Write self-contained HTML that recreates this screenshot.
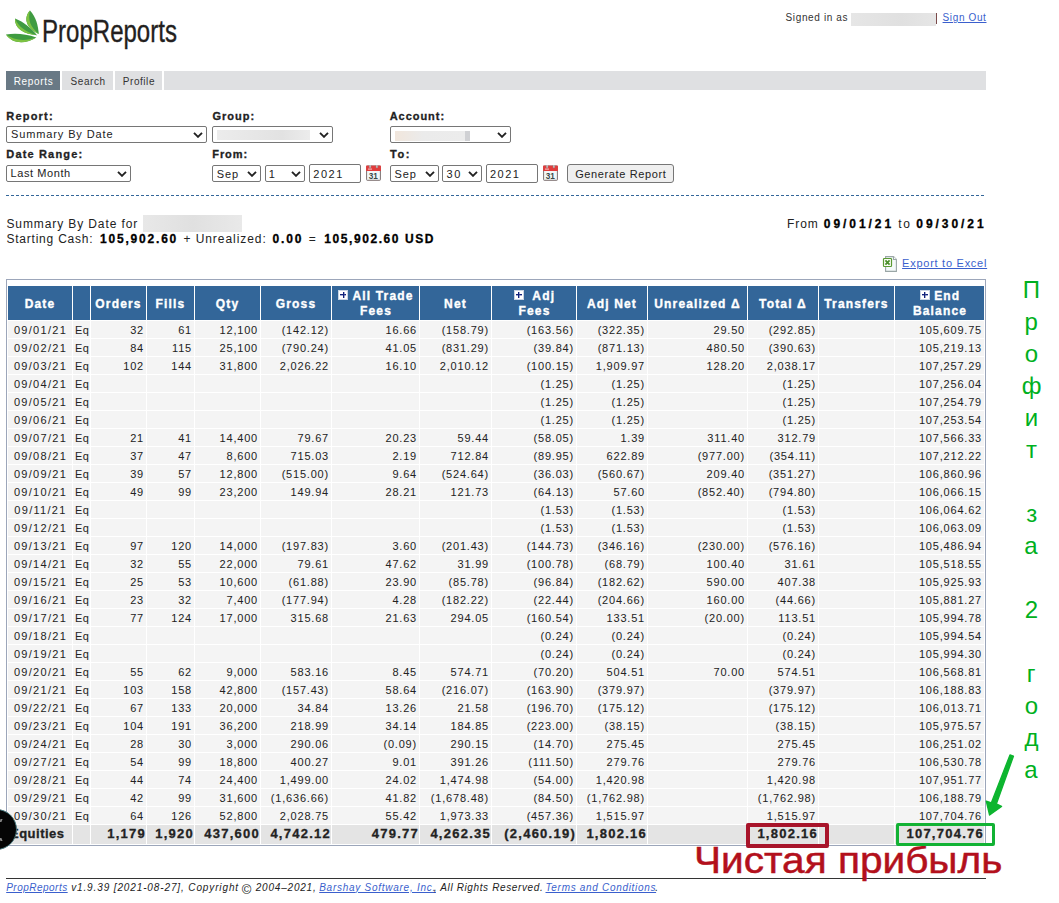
<!DOCTYPE html>
<html><head><meta charset="utf-8"><style>
*{box-sizing:border-box}
html,body{margin:0;padding:0;background:#fff;width:1059px;height:903px;overflow:hidden;position:relative;font-family:"Liberation Sans",sans-serif;color:#222}
.a{position:absolute;white-space:nowrap}
#tbl{position:absolute;left:7px;top:285px;border-collapse:separate;border-spacing:1px;table-layout:fixed;width:978px}
#tbl th{background:#336699;color:#fff;-webkit-text-stroke:0.35px #fff;font-size:12px;font-weight:bold;line-height:15px;height:34px;padding:3px 0 0 0;text-align:center;letter-spacing:1.15px;white-space:nowrap;overflow:hidden;vertical-align:middle}
#tbl th.two{padding-top:2px;padding-left:1px}
#tbl td{background:#f4f4f4;font-size:11px;height:17px;line-height:16px;padding:1px 2px 0 2px;color:#222;letter-spacing:0.8px;white-space:nowrap;overflow:hidden}
#tbl td.n{text-align:right}
#tbl td.dt{text-align:center;letter-spacing:1.3px;padding-left:1px;padding-right:0}
#tbl td.eq{text-align:left;padding-left:2px;letter-spacing:0.3px}
#tbl tr.t td{background:#e4e4e4;font-weight:bold;font-size:13px;height:19px;line-height:18px;padding-top:0;padding-right:0;letter-spacing:1.25px;color:#222;vertical-align:top;-webkit-text-stroke:0.3px #222}
#tbl tr.t td.tl{letter-spacing:0.5px;padding-left:2px}
.pl{display:inline-block;width:10px;height:10px;background:#fff;position:relative;vertical-align:0px;box-shadow:inset 0 0 0 1px #c8d4e4}
.pl:before{content:"";position:absolute;left:2px;top:4px;width:6px;height:1px;background:#10207a;box-shadow:0 0.5px 0 #4a5aa0}
.pl:after{content:"";position:absolute;left:4.5px;top:1.5px;width:1px;height:6px;background:#10207a;box-shadow:0.5px 0 0 #4a5aa0}
</style></head><body>
<svg class="a" style="left:0;top:0" width="60" height="55" viewBox="0 0 60 55">
<path d="M30 10.5 C 24 17, 24.5 27, 38.8 34 C 38 25, 36 17, 30 10.5 Z" fill="#3f9b41"/>
<path d="M30 10.5 C 24 17, 24.5 27, 38.8 34 C 30.5 27, 27.5 20, 30 10.5 Z" fill="#7dc242"/>
<path d="M15 18.5 C 14.5 28, 23 34, 37 35.3 C 31 28, 24 22, 15 18.5 Z" fill="#3f9b41"/>
<path d="M15 18.5 C 14.5 28, 23 34, 37 35.3 C 26 32, 18.5 27, 15 18.5 Z" fill="#7dc242"/>
<path d="M6 34.5 C 13 44.5, 26 44, 36.3 37.5 C 26 34, 16 33, 6 34.5 Z" fill="#3f9b41"/>
<path d="M6 34.5 C 13 44.5, 26 44, 36.3 37.5 C 25 41.5, 14 40.5, 6 34.5 Z" fill="#7dc242"/>
</svg>
<div class="a" style="left:42.08px;top:12.86px;font-size:31px;line-height:37.2px;color:#231f20;-webkit-text-stroke:0.35px #231f20;transform:scaleX(0.7754);transform-origin:0 0">PropReports</div>
<div class="a" style="left:785.55px;top:12.04px;font-size:10px;line-height:12.00px;letter-spacing:0.632px;color:#333;">Signed in as</div>
<div class="a" style="left:851px;top:13px;width:85px;height:13px;background:linear-gradient(to right,#e6e6e6,#e0e0e0 60%,#e6e6e6)"></div>
<div class="a" style="left:936px;top:13px;width:1px;height:11px;background:#7a4a4a"></div>
<div class="a" style="left:942.55px;top:12.04px;font-size:10px;line-height:12.00px;letter-spacing:0.629px;color:#3a5fcd;text-decoration:underline;">Sign Out</div>
<div class="a" style="left:6px;top:71px;width:980px;height:19px;background:#dfe0e2"></div>
<div class="a" style="left:6px;top:71px;width:54px;height:19px;background:#697985"></div>
<div class="a" style="left:60px;top:71px;width:2px;height:19px;background:#fff"></div>
<div class="a" style="left:113px;top:71px;width:2px;height:19px;background:#fff"></div>
<div class="a" style="left:162px;top:71px;width:2px;height:19px;background:#fff"></div>
<div class="a" style="left:13.70px;top:75.53px;font-size:10px;line-height:12.00px;letter-spacing:0.658px;color:#fff;">Reports</div>
<div class="a" style="left:70.55px;top:75.53px;font-size:10px;line-height:12.00px;letter-spacing:0.570px;color:#333;">Search</div>
<div class="a" style="left:122.80px;top:75.53px;font-size:10px;line-height:12.00px;letter-spacing:0.550px;color:#333;">Profile</div>
<div class="a" style="left:6.29px;top:109.59px;font-size:11px;line-height:13.20px;letter-spacing:1.202px;color:#222;font-weight:bold;-webkit-text-stroke:0.3px #222;">Report:</div>
<div class="a" style="left:212.56px;top:109.59px;font-size:11px;line-height:13.20px;letter-spacing:0.971px;color:#222;font-weight:bold;-webkit-text-stroke:0.3px #222;">Group:</div>
<div class="a" style="left:389.73px;top:109.59px;font-size:11px;line-height:13.20px;letter-spacing:0.956px;color:#222;font-weight:bold;-webkit-text-stroke:0.3px #222;">Account:</div>
<div class="a" style="left:6.29px;top:147.59px;font-size:11px;line-height:13.20px;letter-spacing:1.163px;color:#222;font-weight:bold;-webkit-text-stroke:0.3px #222;">Date Range:</div>
<div class="a" style="left:212.28px;top:147.59px;font-size:11px;line-height:13.20px;letter-spacing:0.907px;color:#222;font-weight:bold;-webkit-text-stroke:0.3px #222;">From:</div>
<div class="a" style="left:389.89px;top:147.59px;font-size:11px;line-height:13.20px;letter-spacing:1.688px;color:#222;font-weight:bold;-webkit-text-stroke:0.3px #222;">To:</div>
<div class="a" style="left:6px;top:126px;width:201px;height:17px;border:1px solid #767676;border-radius:2px;background:#fff"></div><svg class="a" style="left:192.5px;top:131.5px" width="10" height="6" viewBox="0 0 10 6"><path d="M1 0.8 L5 4.8 L9 0.8" stroke="#222" stroke-width="1.9" fill="none"/></svg>
<div class="a" style="left:11.01px;top:128.09px;font-size:11px;line-height:13.20px;letter-spacing:0.877px;color:#222;">Summary By Date</div>
<div class="a" style="left:212px;top:126px;width:121px;height:17px;border:1px solid #767676;border-radius:2px;background:#fff"></div><svg class="a" style="left:318.5px;top:131.5px" width="10" height="6" viewBox="0 0 10 6"><path d="M1 0.8 L5 4.8 L9 0.8" stroke="#222" stroke-width="1.9" fill="none"/></svg>
<div class="a" style="left:217px;top:130px;width:93px;height:10px;background:linear-gradient(to right,#ececec,#e2e2e2 70%,#ececec)"></div>
<div class="a" style="left:390px;top:126px;width:121px;height:17px;border:1px solid #767676;border-radius:2px;background:#fff"></div><svg class="a" style="left:496.5px;top:131.5px" width="10" height="6" viewBox="0 0 10 6"><path d="M1 0.8 L5 4.8 L9 0.8" stroke="#222" stroke-width="1.9" fill="none"/></svg>
<div class="a" style="left:395px;top:131px;width:70px;height:10px;background:linear-gradient(to right,#f1e6dc,#ebebeb 40%,#ececec)"></div><div class="a" style="left:465px;top:131px;width:5px;height:10px;background:#d0d1d4"></div>
<div class="a" style="left:6px;top:165px;width:125px;height:17px;border:1px solid #767676;border-radius:2px;background:#fff"></div><svg class="a" style="left:116.5px;top:170.5px" width="10" height="6" viewBox="0 0 10 6"><path d="M1 0.8 L5 4.8 L9 0.8" stroke="#222" stroke-width="1.9" fill="none"/></svg>
<div class="a" style="left:10.62px;top:167.09px;font-size:11px;line-height:13.20px;letter-spacing:0.578px;color:#222;">Last Month</div>
<div class="a" style="left:212px;top:165px;width:49px;height:17px;border:1px solid #767676;border-radius:2px;background:#fff"></div><svg class="a" style="left:246.5px;top:170.5px" width="10" height="6" viewBox="0 0 10 6"><path d="M1 0.8 L5 4.8 L9 0.8" stroke="#222" stroke-width="1.9" fill="none"/></svg>
<div class="a" style="left:216.70px;top:167.59px;font-size:11px;line-height:13.20px;letter-spacing:0.928px;color:#222;">Sep</div>
<div class="a" style="left:265px;top:165px;width:40px;height:17px;border:1px solid #767676;border-radius:2px;background:#fff"></div><svg class="a" style="left:290.5px;top:170.5px" width="10" height="6" viewBox="0 0 10 6"><path d="M1 0.8 L5 4.8 L9 0.8" stroke="#222" stroke-width="1.9" fill="none"/></svg>
<div class="a" style="left:268.68px;top:167.59px;font-size:11px;line-height:13.20px;letter-spacing:0.000px;color:#222;">1</div>
<div class="a" style="left:390px;top:165px;width:49px;height:17px;border:1px solid #767676;border-radius:2px;background:#fff"></div><svg class="a" style="left:424.5px;top:170.5px" width="10" height="6" viewBox="0 0 10 6"><path d="M1 0.8 L5 4.8 L9 0.8" stroke="#222" stroke-width="1.9" fill="none"/></svg>
<div class="a" style="left:394.50px;top:167.59px;font-size:11px;line-height:13.20px;letter-spacing:0.928px;color:#222;">Sep</div>
<div class="a" style="left:442px;top:165px;width:40px;height:17px;border:1px solid #767676;border-radius:2px;background:#fff"></div><svg class="a" style="left:467.5px;top:170.5px" width="10" height="6" viewBox="0 0 10 6"><path d="M1 0.8 L5 4.8 L9 0.8" stroke="#222" stroke-width="1.9" fill="none"/></svg>
<div class="a" style="left:446.56px;top:167.59px;font-size:11px;line-height:13.20px;letter-spacing:1.615px;color:#222;">30</div>
<div class="a" style="left:309px;top:164px;width:52px;height:19px;border:1px solid #767676;border-radius:2px;background:#fff"></div>
<div class="a" style="left:313.25px;top:167.59px;font-size:11px;line-height:13.20px;letter-spacing:1.523px;color:#222;">2021</div>
<div class="a" style="left:486px;top:164px;width:52px;height:19px;border:1px solid #767676;border-radius:2px;background:#fff"></div>
<div class="a" style="left:489.95px;top:167.59px;font-size:11px;line-height:13.20px;letter-spacing:1.523px;color:#222;">2021</div>
<svg class="a" style="left:366px;top:165px" width="15" height="16" viewBox="0 0 15 16"><rect x="0.6" y="1" width="13.8" height="14.3" rx="0.6" fill="#f2f8f8" stroke="#7d7070" stroke-width="1"/><rect x="0.1" y="0.6" width="14.8" height="5.4" fill="#e23c3c"/><rect x="3.3" y="-0.6" width="1.6" height="3.6" rx="0.8" fill="#d8d8d8" stroke="#888" stroke-width="0.5"/><rect x="10.1" y="-0.6" width="1.6" height="3.6" rx="0.8" fill="#d8d8d8" stroke="#888" stroke-width="0.5"/><rect x="2" y="3.6" width="4" height="1" fill="#f6c8c8"/><text x="7.3" y="14" font-size="8.2" font-weight="bold" text-anchor="middle" fill="#3b4848" font-family="Liberation Sans">31</text></svg>
<svg class="a" style="left:543px;top:165px" width="15" height="16" viewBox="0 0 15 16"><rect x="0.6" y="1" width="13.8" height="14.3" rx="0.6" fill="#f2f8f8" stroke="#7d7070" stroke-width="1"/><rect x="0.1" y="0.6" width="14.8" height="5.4" fill="#e23c3c"/><rect x="3.3" y="-0.6" width="1.6" height="3.6" rx="0.8" fill="#d8d8d8" stroke="#888" stroke-width="0.5"/><rect x="10.1" y="-0.6" width="1.6" height="3.6" rx="0.8" fill="#d8d8d8" stroke="#888" stroke-width="0.5"/><rect x="2" y="3.6" width="4" height="1" fill="#f6c8c8"/><text x="7.3" y="14" font-size="8.2" font-weight="bold" text-anchor="middle" fill="#3b4848" font-family="Liberation Sans">31</text></svg>
<div class="a" style="left:567px;top:164px;width:107px;height:19px;border:1px solid #767676;border-radius:3px;background:#efefef"></div>
<div class="a" style="left:575.15px;top:167.59px;font-size:11px;line-height:13.20px;letter-spacing:0.622px;color:#222;">Generate Report</div>
<div class="a" style="left:6px;top:195px;width:980px;height:1px;background:repeating-linear-gradient(to right,#336699 0 3px,transparent 3px 5px)"></div>
<div class="a" style="left:6.46px;top:217.14px;font-size:12px;line-height:14.40px;letter-spacing:0.892px;color:#222;">Summary By Date for</div>
<div class="a" style="left:143px;top:215px;width:99px;height:17px;background:linear-gradient(to right,#e8e8e8,#e0e0e0 50%,#e9e9e9)"></div>
<div class="a" style="left:6.46px;top:231.64px;font-size:12px;line-height:14.40px;letter-spacing:0.777px;color:#222;">Starting Cash:</div>
<div class="a" style="left:100.08px;top:231.64px;font-size:12px;line-height:14.40px;letter-spacing:1.793px;color:#000;font-weight:bold;-webkit-text-stroke:0.3px #000;">105,902.60</div>
<div class="a" style="left:183.40px;top:231.64px;font-size:12px;line-height:14.40px;letter-spacing:0.950px;color:#222;">+ Unrealized:</div>
<div class="a" style="left:272.52px;top:231.64px;font-size:12px;line-height:14.40px;letter-spacing:1.873px;color:#000;font-weight:bold;-webkit-text-stroke:0.3px #000;">0.00</div>
<div class="a" style="left:308.80px;top:231.64px;font-size:12px;line-height:14.40px;letter-spacing:0.000px;color:#222;">=</div>
<div class="a" style="left:324.28px;top:231.64px;font-size:12px;line-height:14.40px;letter-spacing:1.578px;color:#000;font-weight:bold;-webkit-text-stroke:0.3px #000;">105,902.60 USD</div>
<div class="a" style="left:787.04px;top:216.94px;font-size:12px;line-height:14.40px;letter-spacing:0.907px;color:#222;">From</div>
<div class="a" style="left:823.82px;top:216.94px;font-size:12px;line-height:14.40px;letter-spacing:2.943px;color:#000;font-weight:bold;-webkit-text-stroke:0.3px #000;">09/01/21</div>
<div class="a" style="left:898.22px;top:216.94px;font-size:12px;line-height:14.40px;letter-spacing:1.640px;color:#222;">to</div>
<div class="a" style="left:916.32px;top:216.94px;font-size:12px;line-height:14.40px;letter-spacing:2.943px;color:#000;font-weight:bold;-webkit-text-stroke:0.3px #000;">09/30/21</div>
<svg class="a" style="left:882px;top:255px" width="16" height="18" viewBox="0 0 16 18"><path d="M3.6 1.6 H11.5 L14.4 4.5 V16.4 H3.6 Z" fill="#f4fafa" stroke="#9aa6a6" stroke-width="1.1"/><path d="M11.5 1.6 V4.5 H14.4" fill="#ffffff" stroke="#9aa6a6" stroke-width="1.1"/><rect x="1.5" y="3.5" width="8" height="8" rx="0.8" fill="#fdfefb" stroke="#5a9a32" stroke-width="1.2"/><path d="M3.4 5.4 L7.6 9.6 M7.6 5.4 L3.4 9.6" stroke="#4a8f2a" stroke-width="1.8"/></svg>
<div class="a" style="left:902.12px;top:256.59px;font-size:11px;line-height:13.20px;letter-spacing:0.737px;color:#3a5fcd;text-decoration:underline;">Export to Excel</div>
<div class="a" style="left:6px;top:279px;width:980px;height:567px;border:1px solid #9ca6ba"></div>
<table id="tbl"><colgroup><col style="width:64px"><col style="width:17px"><col style="width:55px"><col style="width:47px"><col style="width:65px"><col style="width:70px"><col style="width:87px"><col style="width:71px"><col style="width:84px"><col style="width:70px"><col style="width:99px"><col style="width:70px"><col style="width:75px"><col style="width:89px"></colgroup><tr><th>Date</th><th></th><th>Orders</th><th>Fills</th><th>Qty</th><th>Gross</th><th class=two><span class="pl"></span> All Trade<br>Fees</th><th>Net</th><th class=two><span class="pl"></span>&nbsp; Adj<br>Fees</th><th>Adj Net</th><th>Unrealized &Delta;</th><th>Total &Delta;</th><th>Transfers</th><th class=two><span class="pl"></span> End<br>Balance</th></tr><tr class="r"><td class="dt">09/01/21</td><td class="eq">Eq</td><td class="n">32</td><td class="n">61</td><td class="n">12,100</td><td class="n">(142.12)</td><td class="n">16.66</td><td class="n">(158.79)</td><td class="n">(163.56)</td><td class="n">(322.35)</td><td class="n">29.50</td><td class="n">(292.85)</td><td class="n"></td><td class="n">105,609.75</td></tr><tr class="r"><td class="dt">09/02/21</td><td class="eq">Eq</td><td class="n">84</td><td class="n">115</td><td class="n">25,100</td><td class="n">(790.24)</td><td class="n">41.05</td><td class="n">(831.29)</td><td class="n">(39.84)</td><td class="n">(871.13)</td><td class="n">480.50</td><td class="n">(390.63)</td><td class="n"></td><td class="n">105,219.13</td></tr><tr class="r"><td class="dt">09/03/21</td><td class="eq">Eq</td><td class="n">102</td><td class="n">144</td><td class="n">31,800</td><td class="n">2,026.22</td><td class="n">16.10</td><td class="n">2,010.12</td><td class="n">(100.15)</td><td class="n">1,909.97</td><td class="n">128.20</td><td class="n">2,038.17</td><td class="n"></td><td class="n">107,257.29</td></tr><tr class="r"><td class="dt">09/04/21</td><td class="eq">Eq</td><td class="n"></td><td class="n"></td><td class="n"></td><td class="n"></td><td class="n"></td><td class="n"></td><td class="n">(1.25)</td><td class="n">(1.25)</td><td class="n"></td><td class="n">(1.25)</td><td class="n"></td><td class="n">107,256.04</td></tr><tr class="r"><td class="dt">09/05/21</td><td class="eq">Eq</td><td class="n"></td><td class="n"></td><td class="n"></td><td class="n"></td><td class="n"></td><td class="n"></td><td class="n">(1.25)</td><td class="n">(1.25)</td><td class="n"></td><td class="n">(1.25)</td><td class="n"></td><td class="n">107,254.79</td></tr><tr class="r"><td class="dt">09/06/21</td><td class="eq">Eq</td><td class="n"></td><td class="n"></td><td class="n"></td><td class="n"></td><td class="n"></td><td class="n"></td><td class="n">(1.25)</td><td class="n">(1.25)</td><td class="n"></td><td class="n">(1.25)</td><td class="n"></td><td class="n">107,253.54</td></tr><tr class="r"><td class="dt">09/07/21</td><td class="eq">Eq</td><td class="n">21</td><td class="n">41</td><td class="n">14,400</td><td class="n">79.67</td><td class="n">20.23</td><td class="n">59.44</td><td class="n">(58.05)</td><td class="n">1.39</td><td class="n">311.40</td><td class="n">312.79</td><td class="n"></td><td class="n">107,566.33</td></tr><tr class="r"><td class="dt">09/08/21</td><td class="eq">Eq</td><td class="n">37</td><td class="n">47</td><td class="n">8,600</td><td class="n">715.03</td><td class="n">2.19</td><td class="n">712.84</td><td class="n">(89.95)</td><td class="n">622.89</td><td class="n">(977.00)</td><td class="n">(354.11)</td><td class="n"></td><td class="n">107,212.22</td></tr><tr class="r"><td class="dt">09/09/21</td><td class="eq">Eq</td><td class="n">39</td><td class="n">57</td><td class="n">12,800</td><td class="n">(515.00)</td><td class="n">9.64</td><td class="n">(524.64)</td><td class="n">(36.03)</td><td class="n">(560.67)</td><td class="n">209.40</td><td class="n">(351.27)</td><td class="n"></td><td class="n">106,860.96</td></tr><tr class="r"><td class="dt">09/10/21</td><td class="eq">Eq</td><td class="n">49</td><td class="n">99</td><td class="n">23,200</td><td class="n">149.94</td><td class="n">28.21</td><td class="n">121.73</td><td class="n">(64.13)</td><td class="n">57.60</td><td class="n">(852.40)</td><td class="n">(794.80)</td><td class="n"></td><td class="n">106,066.15</td></tr><tr class="r"><td class="dt">09/11/21</td><td class="eq">Eq</td><td class="n"></td><td class="n"></td><td class="n"></td><td class="n"></td><td class="n"></td><td class="n"></td><td class="n">(1.53)</td><td class="n">(1.53)</td><td class="n"></td><td class="n">(1.53)</td><td class="n"></td><td class="n">106,064.62</td></tr><tr class="r"><td class="dt">09/12/21</td><td class="eq">Eq</td><td class="n"></td><td class="n"></td><td class="n"></td><td class="n"></td><td class="n"></td><td class="n"></td><td class="n">(1.53)</td><td class="n">(1.53)</td><td class="n"></td><td class="n">(1.53)</td><td class="n"></td><td class="n">106,063.09</td></tr><tr class="r"><td class="dt">09/13/21</td><td class="eq">Eq</td><td class="n">97</td><td class="n">120</td><td class="n">14,000</td><td class="n">(197.83)</td><td class="n">3.60</td><td class="n">(201.43)</td><td class="n">(144.73)</td><td class="n">(346.16)</td><td class="n">(230.00)</td><td class="n">(576.16)</td><td class="n"></td><td class="n">105,486.94</td></tr><tr class="r"><td class="dt">09/14/21</td><td class="eq">Eq</td><td class="n">32</td><td class="n">55</td><td class="n">22,000</td><td class="n">79.61</td><td class="n">47.62</td><td class="n">31.99</td><td class="n">(100.78)</td><td class="n">(68.79)</td><td class="n">100.40</td><td class="n">31.61</td><td class="n"></td><td class="n">105,518.55</td></tr><tr class="r"><td class="dt">09/15/21</td><td class="eq">Eq</td><td class="n">25</td><td class="n">53</td><td class="n">10,600</td><td class="n">(61.88)</td><td class="n">23.90</td><td class="n">(85.78)</td><td class="n">(96.84)</td><td class="n">(182.62)</td><td class="n">590.00</td><td class="n">407.38</td><td class="n"></td><td class="n">105,925.93</td></tr><tr class="r"><td class="dt">09/16/21</td><td class="eq">Eq</td><td class="n">23</td><td class="n">32</td><td class="n">7,400</td><td class="n">(177.94)</td><td class="n">4.28</td><td class="n">(182.22)</td><td class="n">(22.44)</td><td class="n">(204.66)</td><td class="n">160.00</td><td class="n">(44.66)</td><td class="n"></td><td class="n">105,881.27</td></tr><tr class="r"><td class="dt">09/17/21</td><td class="eq">Eq</td><td class="n">77</td><td class="n">124</td><td class="n">17,000</td><td class="n">315.68</td><td class="n">21.63</td><td class="n">294.05</td><td class="n">(160.54)</td><td class="n">133.51</td><td class="n">(20.00)</td><td class="n">113.51</td><td class="n"></td><td class="n">105,994.78</td></tr><tr class="r"><td class="dt">09/18/21</td><td class="eq">Eq</td><td class="n"></td><td class="n"></td><td class="n"></td><td class="n"></td><td class="n"></td><td class="n"></td><td class="n">(0.24)</td><td class="n">(0.24)</td><td class="n"></td><td class="n">(0.24)</td><td class="n"></td><td class="n">105,994.54</td></tr><tr class="r"><td class="dt">09/19/21</td><td class="eq">Eq</td><td class="n"></td><td class="n"></td><td class="n"></td><td class="n"></td><td class="n"></td><td class="n"></td><td class="n">(0.24)</td><td class="n">(0.24)</td><td class="n"></td><td class="n">(0.24)</td><td class="n"></td><td class="n">105,994.30</td></tr><tr class="r"><td class="dt">09/20/21</td><td class="eq">Eq</td><td class="n">55</td><td class="n">62</td><td class="n">9,000</td><td class="n">583.16</td><td class="n">8.45</td><td class="n">574.71</td><td class="n">(70.20)</td><td class="n">504.51</td><td class="n">70.00</td><td class="n">574.51</td><td class="n"></td><td class="n">106,568.81</td></tr><tr class="r"><td class="dt">09/21/21</td><td class="eq">Eq</td><td class="n">103</td><td class="n">158</td><td class="n">42,800</td><td class="n">(157.43)</td><td class="n">58.64</td><td class="n">(216.07)</td><td class="n">(163.90)</td><td class="n">(379.97)</td><td class="n"></td><td class="n">(379.97)</td><td class="n"></td><td class="n">106,188.83</td></tr><tr class="r"><td class="dt">09/22/21</td><td class="eq">Eq</td><td class="n">67</td><td class="n">133</td><td class="n">20,000</td><td class="n">34.84</td><td class="n">13.26</td><td class="n">21.58</td><td class="n">(196.70)</td><td class="n">(175.12)</td><td class="n"></td><td class="n">(175.12)</td><td class="n"></td><td class="n">106,013.71</td></tr><tr class="r"><td class="dt">09/23/21</td><td class="eq">Eq</td><td class="n">104</td><td class="n">191</td><td class="n">36,200</td><td class="n">218.99</td><td class="n">34.14</td><td class="n">184.85</td><td class="n">(223.00)</td><td class="n">(38.15)</td><td class="n"></td><td class="n">(38.15)</td><td class="n"></td><td class="n">105,975.57</td></tr><tr class="r"><td class="dt">09/24/21</td><td class="eq">Eq</td><td class="n">28</td><td class="n">30</td><td class="n">3,000</td><td class="n">290.06</td><td class="n">(0.09)</td><td class="n">290.15</td><td class="n">(14.70)</td><td class="n">275.45</td><td class="n"></td><td class="n">275.45</td><td class="n"></td><td class="n">106,251.02</td></tr><tr class="r"><td class="dt">09/27/21</td><td class="eq">Eq</td><td class="n">54</td><td class="n">99</td><td class="n">18,800</td><td class="n">400.27</td><td class="n">9.01</td><td class="n">391.26</td><td class="n">(111.50)</td><td class="n">279.76</td><td class="n"></td><td class="n">279.76</td><td class="n"></td><td class="n">106,530.78</td></tr><tr class="r"><td class="dt">09/28/21</td><td class="eq">Eq</td><td class="n">44</td><td class="n">74</td><td class="n">24,400</td><td class="n">1,499.00</td><td class="n">24.02</td><td class="n">1,474.98</td><td class="n">(54.00)</td><td class="n">1,420.98</td><td class="n"></td><td class="n">1,420.98</td><td class="n"></td><td class="n">107,951.77</td></tr><tr class="r"><td class="dt">09/29/21</td><td class="eq">Eq</td><td class="n">42</td><td class="n">99</td><td class="n">31,600</td><td class="n">(1,636.66)</td><td class="n">41.82</td><td class="n">(1,678.48)</td><td class="n">(84.50)</td><td class="n">(1,762.98)</td><td class="n"></td><td class="n">(1,762.98)</td><td class="n"></td><td class="n">106,188.79</td></tr><tr class="r"><td class="dt">09/30/21</td><td class="eq">Eq</td><td class="n">64</td><td class="n">126</td><td class="n">52,800</td><td class="n">2,028.75</td><td class="n">55.42</td><td class="n">1,973.33</td><td class="n">(457.36)</td><td class="n">1,515.97</td><td class="n"></td><td class="n">1,515.97</td><td class="n"></td><td class="n">107,704.76</td></tr><tr class="t"><td class="tl">Equities</td><td class="eq"></td><td class="n">1,179</td><td class="n">1,920</td><td class="n">437,600</td><td class="n">4,742.12</td><td class="n">479.77</td><td class="n">4,262.35</td><td class="n">(2,460.19)</td><td class="n">1,802.16</td><td class="n"></td><td class="n">1,802.16</td><td class="n"></td><td class="n">107,704.76</td></tr></table>
<div class="a" style="left:-24.5px;top:809px;width:41px;height:41px;border-radius:50%;background:#050505;border:1.5px solid #4a7a80"></div>
<div class="a" style="left:0px;top:819px;width:2px;height:3px;background:#888;transform:skewX(-20deg)"></div><div class="a" style="left:0px;top:838px;width:2px;height:3px;background:#888;transform:skewX(20deg)"></div>
<div class="a" style="left:6px;top:878px;width:980px;height:1px;background:#333"></div>
<div class="a" style="left:6.20px;top:881.53px;font-size:10px;line-height:12.00px;letter-spacing:0.485px;color:#3a5fcd;font-style:italic;text-decoration:underline;">PropReports</div>
<div class="a" style="left:71.15px;top:881.53px;font-size:10px;line-height:12.00px;letter-spacing:0.878px;color:#222;font-style:italic;">v1.9.39 [2021-08-27], Copyright</div>
<div class="a" style="left:241.81px;top:881.70px;font-size:13px;line-height:15.60px;letter-spacing:0.000px;color:#222;">©</div>
<div class="a" style="left:255.65px;top:881.53px;font-size:10px;line-height:12.00px;letter-spacing:0.811px;color:#222;font-style:italic;">2004–2021,</div>
<div class="a" style="left:319.20px;top:881.53px;font-size:10px;line-height:12.00px;letter-spacing:0.736px;color:#3a5fcd;font-style:italic;text-decoration:underline;">Barshay Software, Inc.</div>
<div class="a" style="left:433.80px;top:881.53px;font-size:10px;line-height:12.00px;letter-spacing:0.626px;color:#222;font-style:italic;">, All Rights Reserved.</div>
<div class="a" style="left:545.50px;top:881.53px;font-size:10px;line-height:12.00px;letter-spacing:0.684px;color:#3a5fcd;font-style:italic;text-decoration:underline;">Terms and Conditions</div>
<div class="a" style="left:655.30px;top:881.53px;font-size:10px;line-height:12.00px;letter-spacing:0.000px;color:#222;font-style:italic;">.</div>
<div class="a" style="left:1022.86px;top:276.28px;font-size:24px;line-height:28.80px;letter-spacing:0.000px;color:#00b020;">П</div>
<div class="a" style="left:1024.54px;top:308.28px;font-size:24px;line-height:28.80px;letter-spacing:0.000px;color:#00b020;">р</div>
<div class="a" style="left:1024.84px;top:340.28px;font-size:24px;line-height:28.80px;letter-spacing:0.000px;color:#00b020;">о</div>
<div class="a" style="left:1021.66px;top:372.28px;font-size:24px;line-height:28.80px;letter-spacing:0.000px;color:#00b020;">ф</div>
<div class="a" style="left:1024.78px;top:404.28px;font-size:24px;line-height:28.80px;letter-spacing:0.000px;color:#00b020;">и</div>
<div class="a" style="left:1026.04px;top:436.28px;font-size:24px;line-height:28.80px;letter-spacing:0.000px;color:#00b020;">т</div>
<div class="a" style="left:1026.16px;top:500.28px;font-size:24px;line-height:28.80px;letter-spacing:0.000px;color:#00b020;">з</div>
<div class="a" style="left:1024.36px;top:532.28px;font-size:24px;line-height:28.80px;letter-spacing:0.000px;color:#00b020;">а</div>
<div class="a" style="left:1024.84px;top:596.28px;font-size:24px;line-height:28.80px;letter-spacing:0.000px;color:#00b020;">2</div>
<div class="a" style="left:1026.64px;top:660.28px;font-size:24px;line-height:28.80px;letter-spacing:0.000px;color:#00b020;">г</div>
<div class="a" style="left:1024.84px;top:692.28px;font-size:24px;line-height:28.80px;letter-spacing:0.000px;color:#00b020;">о</div>
<div class="a" style="left:1024.60px;top:724.28px;font-size:24px;line-height:28.80px;letter-spacing:0.000px;color:#00b020;">д</div>
<div class="a" style="left:1024.36px;top:756.28px;font-size:24px;line-height:28.80px;letter-spacing:0.000px;color:#00b020;">а</div>
<div class="a" style="left:694.25px;top:839.48px;font-size:37px;line-height:44.4px;color:#b3101c;-webkit-text-stroke:0.5px #b3101c;transform:scaleX(1.0966);transform-origin:0 0">Чистая прибыль</div>
<div class="a" style="left:746px;top:823px;width:83px;height:25px;border:4px solid #a8142a;border-radius:2px"></div>
<div class="a" style="left:896px;top:823px;width:99px;height:23px;border:3.6px solid #12b234;border-radius:2px"></div>
<svg class="a" style="left:980px;top:750px" width="40" height="70" viewBox="0 0 40 70">
<path d="M30 5 L33.4 6.2 L16.3 54 L21.5 56.4 L9.6 65 L6.3 51.2 L11.4 52.8 Z" fill="#0db52f" stroke="#0db52f" stroke-width="1.4" stroke-linejoin="round"/>
</svg>
</body></html>
